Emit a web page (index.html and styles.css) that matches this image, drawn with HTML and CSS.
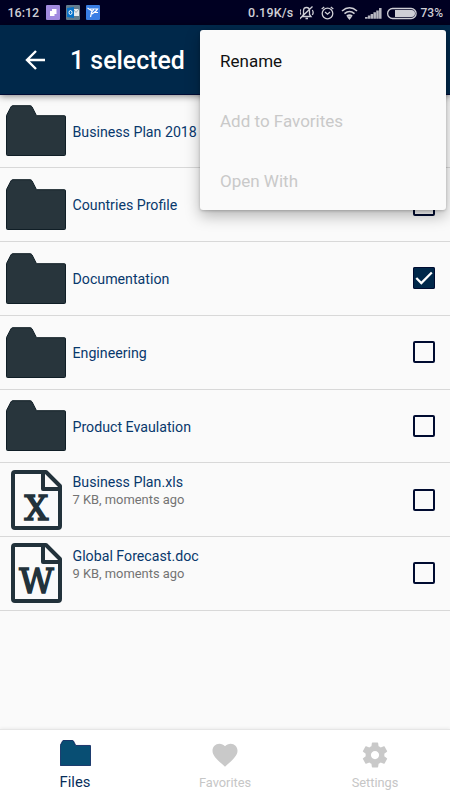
FILE: index.html
```html
<!DOCTYPE html>
<html lang="en">
<head>
<meta charset="utf-8">
<title>Files</title>
<link rel="stylesheet" href="styles.css">
</head>
<body>
<svg class="defs" width="0" height="0">
  <symbol id="folder" viewBox="0 0 60 51">
    <path d="M1.500 50.500Q.5 50.500.5 49.500V10.500L5 1.800Q5.500.7 7 .7H24Q25.300.7 26 1.800L30.500 10.700H58.500Q59.500 10.700 59.500 11.700V49.500Q59.500 50.500 58.500 50.500Z"/>
  </symbol>
  <symbol id="page" viewBox="0 0 51 60">
    <path d="M4 2H35L49 16V56Q49 58 47 58H4Q2 58 2 56V4Q2 2 4 2ZM32 2V19H49" fill="none" stroke="#22323b" stroke-width="4" stroke-linejoin="round"/>
  </symbol>
</svg>
<div class="screen">
  <div class="status">
    <span class="clock">16:12</span>
    <svg class="notes" width="55" height="15" viewBox="0 0 55 15">
      <rect width="14" height="15" rx="1" fill="#a18be0"/><rect x="6" y="4" width="4.500" height="5" fill="#fff"/><rect x="4" y="6" width="4.500" height="5" fill="#fff"/>
      <rect x="20" width="14" height="15" rx="1" fill="#647d8d"/><path d="M27 4H33V11H27Z" fill="#e5eaec"/><path d="M27 4L30 7.500L33 4" fill="none" stroke="#9aa8b0"/><path d="M21 3L28 2V13L21 12Z" fill="#0872c8"/><ellipse cx="24.500" cy="7.500" rx="1.500" ry="2" fill="none" stroke="#fff"/>
      <rect x="40" width="14" height="15" rx="1" fill="#397ee5"/><path d="M41.500 3L46 6L44.500 12M44 4H48L45 8M49 4H51.500L49 7.500H52M46 9L50 6" fill="none" stroke="#fff" stroke-width="1.200"/>
    </svg>
    <span class="speed">0.19K/s</span>
    <svg class="sys" width="118" height="16" viewBox="0 0 118 16" fill="none" stroke="#cfcfd6" stroke-width="1.300">
      <path d="M3.500 11.500H12.500L11 9.500V6C11 3.800 9.800 2.500 8 2.500S5 3.800 5 6V9.500ZM7 13.500H9.500M1 14L14 1.500M2.300 4.500Q.7 7 2.300 9.500M13.800 5Q15.500 7.500 13.800 10" transform="translate(-1.500 0)"/>
      <circle cx="27.500" cy="8.500" r="5.300"/><path d="M25 7L27.500 9.200L30 7M21.700 4L24.200 2M30.800 2L33.300 4"/>
      <path d="M42 6Q49.500 -.5 57 6M44.500 8.700Q49.500 4.300 54.500 8.700M46.800 11.200Q49.500 9 52.200 11.200" stroke-width="1.600"/><path d="M48 12L49.500 14L51 12Z" fill="#cfcfd6"/>
      <path d="M66.300 13.800V12M69.100 13.800V10.500M71.900 13.800V9M74.700 13.800V7.200M77.500 13.800V5.400M80.300 13.800V3" stroke-width="2.500" stroke="#b8b8c2"/>
      <rect x="87.600" y="3.500" width="28.500" height="10" rx="5"/><path d="M95 5H111.500Q115 5.300 115 8.500T111.500 12H95Z" fill="#cfcfd6" stroke="none"/>
    </svg>
    <span class="battery">73%</span>
  </div>
  <header class="bar">
    <svg width="20" height="20" viewBox="0 0 20 20" fill="none" stroke="#fff" stroke-width="2.400"><path d="M20 10H2M11 1L2 10L11 19"/></svg>
    <h1>1 selected</h1>
  </header>
  <main class="list">
    <div class="row"><svg class="folder"><use href="#folder"/></svg><div class="name">Business Plan 2018</div><i class="box"></i></div>
    <div class="row"><svg class="folder"><use href="#folder"/></svg><div class="name">Countries Profile</div><i class="box"></i></div>
    <div class="row"><svg class="folder"><use href="#folder"/></svg><div class="name">Documentation</div><i class="box checked"><svg width="22" height="22" viewBox="0 0 22 22"><path d="M3.300 11L8.300 16L18.800 5.500" fill="none" stroke="#fff" stroke-width="2.300"/></svg></i></div>
    <div class="row"><svg class="folder"><use href="#folder"/></svg><div class="name">Engineering</div><i class="box"></i></div>
    <div class="row"><svg class="folder"><use href="#folder"/></svg><div class="name">Product Evaulation</div><i class="box"></i></div>
    <div class="row file"><div class="doc"><svg width="51" height="60"><use href="#page"/></svg><b>X</b></div><div class="name">Business Plan.xls<small>7 KB, moments ago</small></div><i class="box"></i></div>
    <div class="row file"><div class="doc"><svg width="51" height="60"><use href="#page"/></svg><b>W</b></div><div class="name">Global Forecast.doc<small>9 KB, moments ago</small></div><i class="box"></i></div>
  </main>
  <nav class="tabs">
    <div class="tab active"><svg class="tabfolder" width="31" height="26" viewBox="0 0 60 51" preserveAspectRatio="none"><use href="#folder"/></svg><span>Files</span></div>
    <div class="tab"><svg width="30" height="30" viewBox="0 0 24 24"><path d="M12 21.350l-1.450-1.320C5.400 15.360 2 12.280 2 8.500 2 5.420 4.420 3 7.500 3c1.740 0 3.410.81 4.500 2.090C13.090 3.810 14.760 3 16.500 3 19.580 3 22 5.420 22 8.500c0 3.780-3.400 6.860-8.550 11.540L12 21.350z"/></svg><span>Favorites</span></div>
    <div class="tab"><svg width="30" height="30" viewBox="0 0 24 24"><path d="M19.430 12.980c.04-.32.07-.64.07-.98s-.03-.66-.07-.98l2.110-1.650c.19-.15.240-.42.120-.64l-2-3.460c-.12-.22-.39-.3-.61-.22l-2.490 1c-.52-.4-1.080-.73-1.690-.98l-.38-2.650C14.460 2.180 14.250 2 14 2h-4c-.25 0-.46.180-.49.420l-.38 2.650c-.61.250-1.170.59-1.690.98l-2.490-1c-.23-.09-.49 0-.61.220l-2 3.460c-.13.220-.07.490.12.640l2.110 1.650c-.04.320-.07.650-.07.980s.03.660.07.980l-2.110 1.650c-.19.150-.24.420-.12.640l2 3.460c.12.220.39.300.61.220l2.490-1c.52.400 1.080.730 1.690.980l.38 2.650c.03.240.24.420.49.420h4c.25 0 .46-.18.49-.42l.38-2.650c.61-.25 1.170-.59 1.690-.98l2.490 1c.23.090.49 0 .61-.22l2-3.460c.12-.22.07-.49-.12-.64l-2.110-1.650zM12 15.300c-1.800 0-3.300-1.500-3.300-3.300s1.500-3.300 3.300-3.300 3.300 1.500 3.300 3.300-1.500 3.300-3.300 3.300z"/></svg><span>Settings</span></div>
  </nav>
  <div class="menu"><div>Rename</div><div class="off">Add to Favorites</div><div class="off">Open With</div></div>
</div>
</body>
</html>
```
FILE: styles.css
```css
* { box-sizing: border-box; }
body { margin: 0; font-family: Roboto, sans-serif; }
.defs { position: absolute; }
.screen { position: relative; width: 450px; height: 800px; overflow: hidden; display: flex; flex-direction: column; background: #fafafa; }
.status { height: 25px; flex: none; background: #000022; display: flex; align-items: center; padding-left: 7.500px; color: #cfcfd6; font-size: 12.500px; font-weight: 500; }
.clock { width: 38.500px; }
.speed { margin-left: auto; letter-spacing: .2px; }
.sys { margin-left: 6px; margin-right: 3px; }
.battery { width: 29.500px; font-size: 12px; }
.bar { height: 69.600px; flex: none; background: #00284a; border-bottom: 1px solid #000c35; display: flex; align-items: center; padding: 1px 0 0 25px; gap: 25px; box-shadow: 0 1px 7px rgba(0,0,0,.5); z-index: 1; }
h1 { margin: 0; padding-top: 2px; color: #fff; font-size: 24.900px; font-weight: 500; line-height: 30px; }
.list { flex: 1; }
.row { height: 73.750px; border-bottom: 1px solid #d8d8d8; display: flex; align-items: center; padding: 0 15px 0 6px; }
.folder { width: 60px; height: 51px; fill: #28353c; stroke: #101e26; stroke-width: 1px; }
.name { flex: 1; margin-left: 6.500px; padding-top: 1.500px; color: #08386c; font-size: 14.200px; line-height: 18px; }
.name small { display: block; color: #737373; font-size: 12.900px; }
.file .name { align-self: flex-start; padding-top: 9.500px; }
.box { flex: none; width: 22px; height: 22px; border: 2px solid #000b30; border-radius: 2px; }
.checked { background: #00284a; border: 0; box-shadow: inset 0 0 0 1px #000b30; }
.checked svg { display: block; }
.doc { width: 51px; height: 60px; margin: 0 4px 0 5px; position: relative; }
.doc svg { display: block; }
.doc b { position: absolute; inset: 20px 0 auto 0; display: flex; justify-content: center; font: 33.500px/38px "DejaVu Serif", serif; color: #22323b; -webkit-text-stroke: 1.600px #22323b; }
.tabs { height: 71px; flex: none; background: #fff; border-top: 1px solid #e6e6e6; box-shadow: 0 -1px 3px rgba(0,0,0,.06); display: flex; }
.tab { width: 150px; display: flex; flex-direction: column; align-items: center; padding-top: 10px; fill: #c9c9c9; color: #c6c6c6; font-size: 12.800px; line-height: 18px; }
.tab span { margin-top: 4px; }
.tab.active { padding-top: 10px; color: #062d5a; font-size: 14.800px; }
.tab.active span { margin-top: 7px; }
.tabfolder { fill: #084e73; stroke: #001454; stroke-width: 1.500px; }
.menu { position: absolute; z-index: 2; left: 200px; top: 30px; width: 245.500px; height: 180px; border-radius: 3px; background: #fafafa; box-shadow: 0 6px 15px rgba(0,0,0,.28), 0 1px 3px rgba(0,0,0,.2); padding-left: 20px; color: #111; font-size: 17px; line-height: 62px; }
.menu div { height: 60px; }
.menu .off { color: #c9c9c9; }
```
